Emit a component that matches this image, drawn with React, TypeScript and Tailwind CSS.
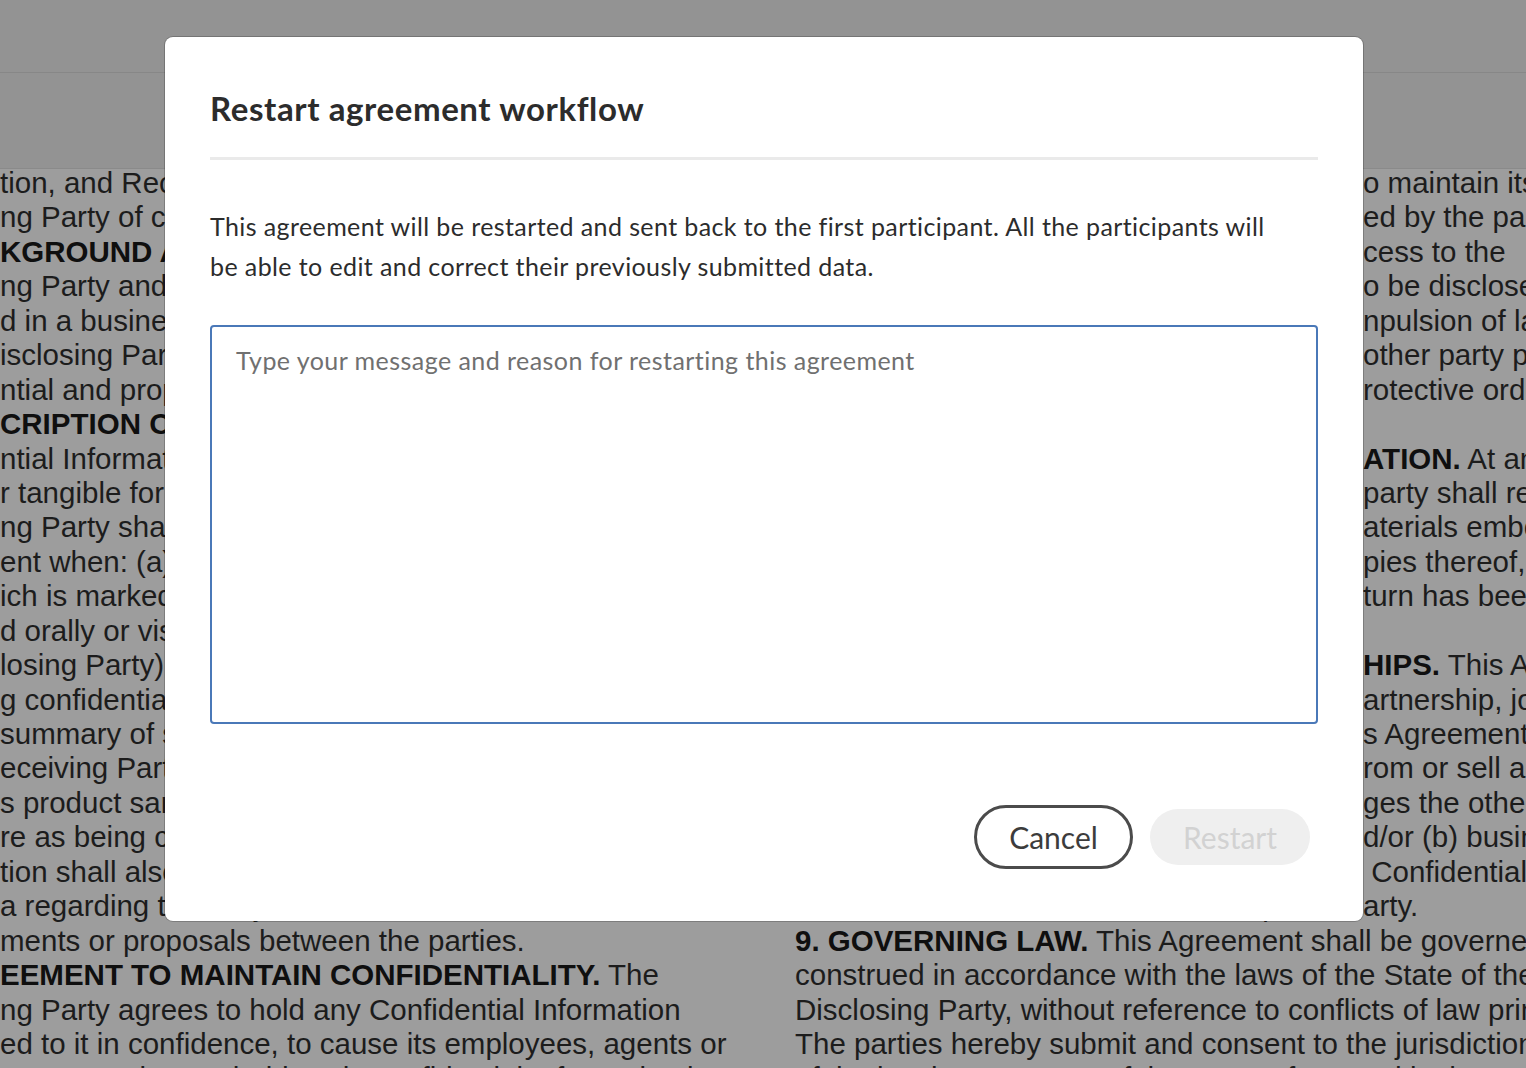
import React from 'react'

const leftLines: { text: string; bold?: string }[] = [
  { text: 'tion, and Receiving Party' },
  { text: 'ng Party of certain information' },
  { text: '', bold: 'KGROUND AND PURPOSE.' },
  { text: 'ng Party and the Receiving Party' },
  { text: 'd in a business relationship' },
  { text: 'isclosing Party has developed' },
  { text: 'ntial and proprietary information' },
  { text: '', bold: 'CRIPTION OF CONFIDENTIAL' },
  { text: 'ntial Information shall mean' },
  { text: 'r tangible form that the' },
  { text: 'ng Party shall consider' },
  { text: 'ent when: (a) it is disclosed' },
  { text: 'ich is marked confidential' },
  { text: 'd orally or visually and is' },
  { text: 'losing Party) as being' },
  { text: 'g confidential information' },
  { text: 'summary of such disclosure' },
  { text: 'eceiving Party may receive' },
  { text: 's product samples or' },
  { text: 're as being confidential' },
  { text: 'tion shall also include' },
  { text: 'a regarding the subject matter' },
  { text: 'ments or proposals between the parties.' },
  { text: ' The', bold: 'EEMENT TO MAINTAIN CONFIDENTIALITY.' },
  { text: 'ng Party agrees to hold any Confidential Information' },
  { text: 'ed to it in confidence, to cause its employees, agents or' },
  { text: 'epresentatives to hold such Confidential Information in' },
]

// right column: hidden part sits under the dialog, only the tail shows
const rightLines: { hidden?: string; text: string; bold?: string }[] = [
  { hidden: 'The Receiving Party shall take reasonable steps t', text: 'o maintain its' },
  { hidden: 'confidentiality, limit access to those employ', text: 'ed by the party' },
  { hidden: 'who need to know and who have ac', text: 'cess to the' },
  { hidden: 'information. If any information is required t', text: 'o be disclosed' },
  { hidden: 'pursuant to a subpoena or other com', text: 'npulsion of law,' },
  { hidden: 'the Receiving Party shall notify the ', text: 'other party p' },
  { hidden: 'promptly so that it may seek a p', text: 'rotective order.' },
  { hidden: '', text: '' },
  { hidden: '5. RETURN OF INFORM', text: ' At any', bold: 'ATION.' },
  { hidden: 'time upon the request of either ', text: 'party shall return' },
  { hidden: 'all documents and other m', text: 'aterials embodying' },
  { hidden: 'the Confidential Information and all co', text: 'pies thereof,' },
  { hidden: 'and shall certify that such re', text: 'turn has been' },
  { hidden: '', text: '' },
  { hidden: '6. NO RELATIONS', text: ' This Agreement', bold: 'HIPS.' },
  { hidden: 'does not create any agency, p', text: 'artnership, joint' },
  { hidden: 'venture or employment relationship. Thi', text: 's Agreement' },
  { hidden: 'shall not obligate either party to buy f', text: 'rom or sell a' },
  { hidden: 'product. Each party acknowled', text: 'ges the other' },
  { hidden: 'may develop (a) competing products an', text: 'd/or (b) business' },
  { hidden: 'opportunities without use of the other party’s', text: ' Confidential' },
  { hidden: 'Information received from the other p', text: 'arty.' },
  { text: ' This Agreement shall be governed and', bold: '9. GOVERNING LAW.' },
  { text: 'construed in accordance with the laws of the State of the' },
  { text: 'Disclosing Party, without reference to conflicts of law principles.' },
  { text: 'The parties hereby submit and consent to the jurisdiction' },
  { text: 'of the local state courts of the state referenced in the' },
]

export default function App() {
  return (
    <div className="relative w-[1526px] h-[1068px] overflow-hidden bg-[#939393]">

      {/* page behind the dialog (dimmed) */}
      <header className="h-[73px] border-b border-[#878787]" />
      <div className="h-[96px] border-b border-[#8a8a8a]" />

      <main
        className="h-[899px] overflow-hidden bg-[#9d9d9d] text-[#1c1c1c] text-[29.5px] leading-[34.44px] whitespace-nowrap"
        style={{ fontFamily: '"Liberation Sans", Arial, sans-serif' }}
      >
        <div className="flex -mt-[3px]">
          <div className="w-[795px] shrink-0 overflow-hidden">
            {leftLines.map((l, i) => (
              <div key={i} className="h-[34.44px]">
                {l.bold && <b className="text-[#0f0f0f]">{l.bold}</b>}
                {l.text}
              </div>
            ))}
          </div>
          <div className="flex-1 overflow-hidden">
            {rightLines.map((l, i) => (
              <div key={i} className="h-[34.44px]">
                {l.hidden !== undefined && (
                  <span className="inline-block w-[568px] overflow-hidden align-top">{l.hidden}</span>
                )}
                {l.bold && <b className="text-[#0f0f0f]">{l.bold}</b>}
                {l.text}
              </div>
            ))}
          </div>
        </div>
      </main>

      {/* Dialog */}
      <div className="absolute inset-0 flex justify-center pt-[37px] pl-[2px]">
        <div
          className="w-[1198px] h-[884px] bg-white rounded-[8px] shadow-[0_0_0_1px_rgba(0,0,0,0.2)] px-[45px] pt-[51px] flex flex-col"
          style={{ fontFamily: 'Lato, "Noto Sans", sans-serif' }}
        >
          <h2 className="text-[33px] leading-[40px] font-bold tracking-[0.6px] text-[#2c2c2c]">
            Restart agreement workflow
          </h2>
          <div className="h-[3px] bg-[#eaeaea] mt-[29px]" />
          <p className="mt-[46px] text-[25px] leading-[40px] tracking-[0.4px] text-[#2c2c2c]">
            This agreement will be restarted and sent back to the first participant. All the participants will
            <br />
            be able to edit and correct their previously submitted data.
          </p>
          <textarea
            className="mt-[39px] h-[399px] w-full resize-none rounded-[4px] border-2 border-[#4a78b8] px-[24px] pt-[15px] text-[25px] leading-[36px] tracking-[0.45px] text-[#2c2c2c] placeholder:text-[#707070] outline-none"
            placeholder="Type your message and reason for restarting this agreement"
          />
          <div className="mt-[81px] flex items-center justify-end gap-[17px] pr-[8px]">
            <button className="h-[64px] w-[159px] rounded-full border-[3px] border-[#4b4b4b] text-[30px] text-[#3c3c3c]">
              Cancel
            </button>
            <button
              disabled
              className="h-[56px] w-[160px] rounded-full bg-[#efefef] text-[30px] text-[#d2d2d2]"
            >
              Restart
            </button>
          </div>
        </div>
      </div>
    </div>
  )
}
